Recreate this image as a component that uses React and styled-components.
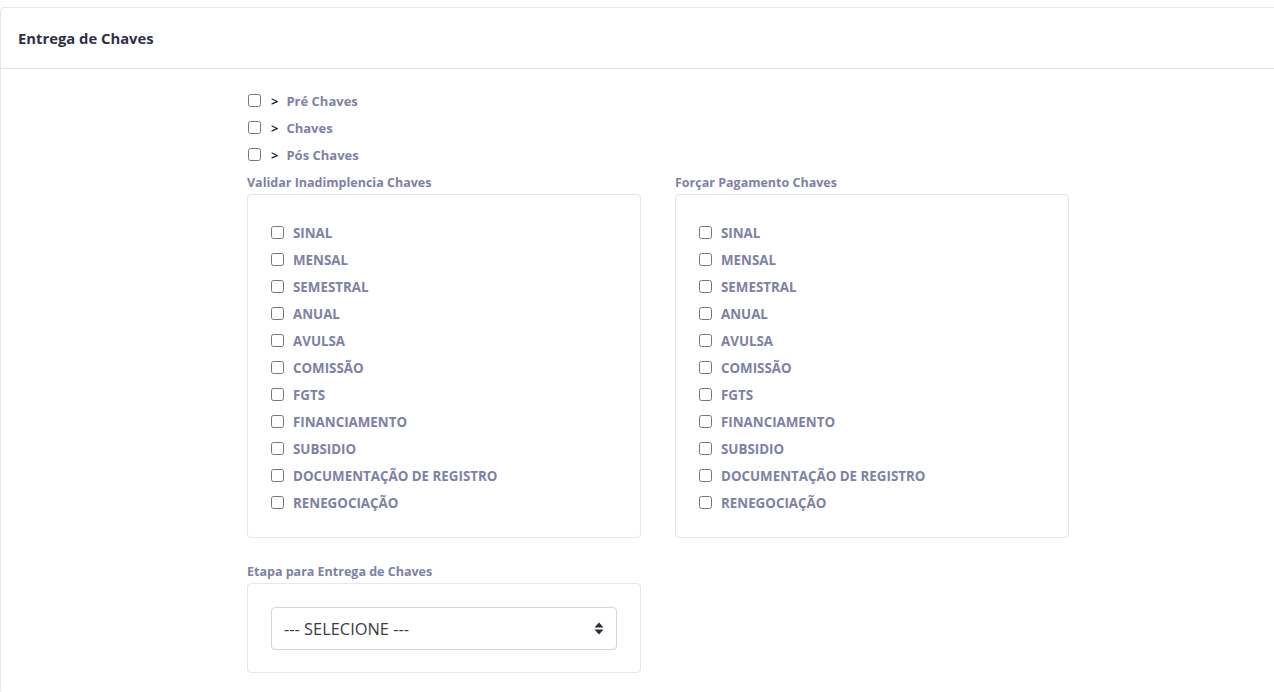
import React from 'react';
import styled, { createGlobalStyle } from 'styled-components';

const GlobalStyle = createGlobalStyle`
  html, body {
    margin: 0;
    padding: 0;
    background: #ffffff;
    overflow: hidden;
  }
  body {
    font-family: "Open Sans", "Noto Sans", "Liberation Sans", sans-serif;
  }
`;

const Page = styled.div`
  padding-top: 7px;
`;

const Card = styled.div`
  width: 1290px;
  border: 1px solid #e4e6ec;
  border-radius: 4px;
  background: #fff;
`;

const CardHeader = styled.div`
  height: 60px;
  display: flex;
  align-items: center;
  padding: 0 17px;
  border-bottom: 1px solid #e4e6ec;
`;

const CardTitle = styled.h3`
  margin: 0;
  font-size: 14.8px;
  font-weight: 700;
  color: #2f3043;
`;

const CardBody = styled.div`
  padding: 18px 0 20px 246px;
`;

const Row = styled.label`
  display: flex;
  align-items: center;
  height: 27px;
  font-size: ${(p) => (p.$big ? '13.35px' : '13px')};
  font-weight: 700;
  color: #7e81a4;
  cursor: pointer;
`;

const Check = styled.input.attrs({ type: 'checkbox' })`
  width: 13px;
  height: 13px;
  margin: 0 ${(p) => p.$gap}px -1px 1px;
  position: relative;
  top: -1px;
`;

const Arrow = styled.span`
  color: #1e2133;
  font-weight: 700;
  margin-right: 8px;
  font-size: 13px;
`;

const Columns = styled.div`
  display: flex;
  gap: 34px;
  margin-top: 6px;
  margin-bottom: 25px;
`;

const Group = styled.div`
  width: 394px;
`;

const GroupLabel = styled.div`
  height: 17px;
  line-height: 17px;
  margin-bottom: 3px;
  font-size: 12.5px;
  font-weight: 700;
  color: #7e81a4;
`;

const Box = styled.div`
  border: 1px solid #e4e6ec;
  border-radius: 4px;
  padding: ${(p) => p.$pad};
`;

const SelectWrap = styled.div`
  position: relative;
`;

const Select = styled.select`
  width: 100%;
  height: 43px;
  appearance: none;
  -webkit-appearance: none;
  border: 1px solid #d3d6de;
  border-radius: 4px;
  background: #fff;
  padding: 0 12px;
  font-family: "Open Sans", "Noto Sans", sans-serif;
  font-size: 16.4px;
  color: #3a3b45;
  outline: none;
`;

const Carets = styled.svg`
  position: absolute;
  right: 13px;
  top: 15px;
  pointer-events: none;
`;

const items = [
  'SINAL',
  'MENSAL',
  'SEMESTRAL',
  'ANUAL',
  'AVULSA',
  'COMISSÃO',
  'FGTS',
  'FINANCIAMENTO',
  'SUBSIDIO',
  'DOCUMENTAÇÃO DE REGISTRO',
  'RENEGOCIAÇÃO',
];

const CheckList = ({ title }) => (
  <Group>
    <GroupLabel>{title}</GroupLabel>
    <Box $pad="24px 22px 21px">
      {items.map((item) => (
        <Row key={item} $big>
          <Check $gap={9} />
          {item}
        </Row>
      ))}
    </Box>
  </Group>
);

const App = () => (
  <Page>
    <GlobalStyle />
    <Card>
      <CardHeader>
        <CardTitle>Entrega de Chaves</CardTitle>
      </CardHeader>
      <CardBody>
        {['Pré Chaves', 'Chaves', 'Pós Chaves'].map((stage) => (
          <Row key={stage}>
            <Check $gap={10} />
            <Arrow>&gt;</Arrow>
            {stage}
          </Row>
        ))}
        <Columns>
          <CheckList title="Validar Inadimplencia Chaves" />
          <CheckList title="Forçar Pagamento Chaves" />
        </Columns>
        <Group>
          <GroupLabel>Etapa para Entrega de Chaves</GroupLabel>
          <Box $pad="23px 23px 22px">
            <SelectWrap>
              <Select defaultValue="">
                <option value="">--- SELECIONE ---</option>
              </Select>
              <Carets width="10" height="13" viewBox="0 0 10 13">
                <path d="M5 0.5 L9.5 5.5 H0.5 Z" fill="#2b2d3a" />
                <path d="M5 12.5 L9.5 7.5 H0.5 Z" fill="#2b2d3a" />
              </Carets>
            </SelectWrap>
          </Box>
        </Group>
      </CardBody>
    </Card>
  </Page>
);

export default App;
